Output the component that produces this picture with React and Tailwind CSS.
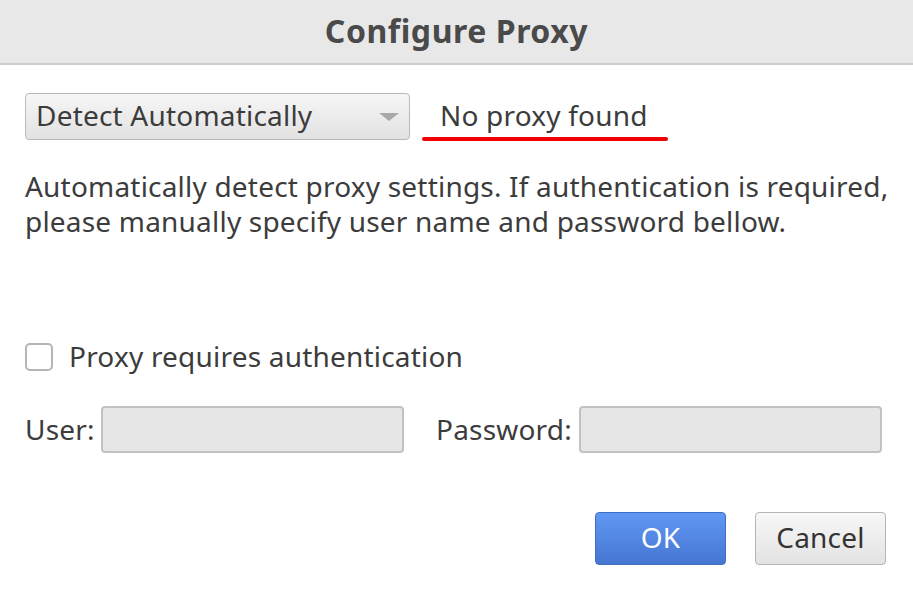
export default function App() {
  const font = { fontFamily: '"Noto Sans", "Open Sans", sans-serif' };
  return (
    <div className="w-[913px] h-[593px] bg-white text-[#3c3c3c] overflow-hidden tracking-[0.2px]" style={font}>
      <div className="h-[65px] bg-[#e8e8e8] border-b-2 border-[#cdcdcd] flex items-center justify-center">
        <h1 className="text-[32px] font-bold text-[#4a4a4a] tracking-[0.55px] -mt-[2px]">Configure Proxy</h1>
      </div>

      <div className="pl-[25px] pr-[27px]">
        <div className="mt-[28px] flex items-center">
          <div className="w-[385px] h-[47px] rounded-[4px] border border-[#b9b9b9] bg-gradient-to-b from-[#f6f6f6] to-[#e2e2e2] flex items-center justify-between pl-[10px] pr-[10px]">
            <span className="text-[28px] leading-none -mt-[3px]">Detect Automatically</span>
            <svg width="20" height="10" viewBox="0 0 20 10">
              <path d="M0 1 L20 1 L10 9 Z" fill="#a9a9a9" />
            </svg>
          </div>
          <div className="ml-[12px] relative">
            <span className="block pl-[18px] pr-[20px] text-[28px] leading-[44px] pb-[3px]">No proxy found</span>
            <div className="absolute left-0 right-0 top-[44px] h-[4px] rounded-full bg-[#f00000]" />
          </div>
        </div>

        <p className="mt-[29px] text-[28px] leading-[35px] w-[880px]">
          Automatically detect proxy settings. If authentication is required, please manually specify user name and password bellow.
        </p>

        <div className="mt-[104px] flex items-center">
          <div className="w-[28px] h-[28px] rounded-[5px] border-2 border-[#b5b5b5] bg-white" />
          <span className="ml-[16px] text-[28px] leading-none -mt-[2px]">Proxy requires authentication</span>
        </div>

        <div className="mt-[35px] flex items-center">
          <span className="w-[67px] text-[28px] leading-none -mt-[2px]">User:</span>
          <div className="ml-[9px] w-[303px] h-[47px] rounded-[4px] border-2 border-[#c2c2c2] bg-[#e6e6e6]" />
          <span className="ml-[32px] w-[133px] text-[28px] leading-none -mt-[2px]">Password:</span>
          <div className="ml-[10px] w-[303px] h-[47px] rounded-[4px] border-2 border-[#c2c2c2] bg-[#e6e6e6]" />
        </div>

        <div className="mt-[59px] flex justify-end gap-[29px]">
          <button className="w-[131px] h-[53px] rounded-[4px] border border-[#3f6fc4] bg-gradient-to-b from-[#6098f4] to-[#4576d2] text-white text-[28px] pb-[3px]">
            OK
          </button>
          <button className="w-[131px] h-[53px] rounded-[4px] border border-[#b5b5b5] bg-gradient-to-b from-[#f7f7f7] to-[#e3e3e3] text-[#333] text-[28px] pb-[3px]">
            Cancel
          </button>
        </div>
      </div>
    </div>
  );
}
